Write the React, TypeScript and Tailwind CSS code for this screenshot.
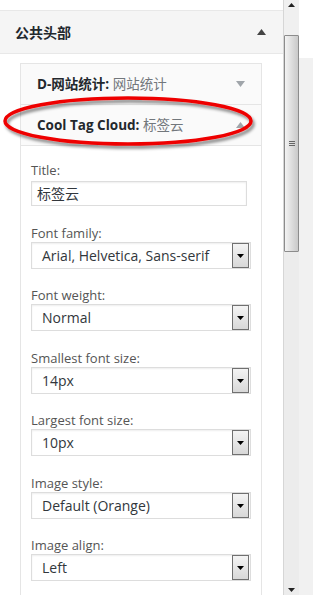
import React from "react";

const FONT = "font-['Open_Sans','Noto_Sans_CJK_SC',sans-serif]";

interface Field {
  label: string;
  value: string;
  gap: string;
}

// gaps alternate so the rows land on a 62.5px rhythm like the original
const selects: Field[] = [
  { label: "Font family:", value: "Arial, Helvetica, Sans-serif", gap: "mt-[18px]" },
  { label: "Font weight:", value: "Normal", gap: "mt-[17px]" },
  { label: "Smallest font size:", value: "14px", gap: "mt-[18px]" },
  { label: "Largest font size:", value: "10px", gap: "mt-[17px]" },
  { label: "Image style:", value: "Default (Orange)", gap: "mt-[18px]" },
  { label: "Image align:", value: "Left", gap: "mt-[17px]" },
];

const Arrow = ({ up, color }: { up?: boolean; color: string }) => (
  <svg width="9" height="6" viewBox="0 0 9 6" className="block">
    <polygon points={up ? "0,6 9,6 4.5,0" : "0,0 9,0 4.5,6"} fill={color} />
  </svg>
);

// Fake select with the old-style windows dropdown button
const SelectBox = ({ value }: { value: string }) => (
  <div className="flex items-center w-[220px] h-[27px] border border-[#dddddd] bg-white shadow-[inset_0_1px_2px_rgba(0,0,0,0.07)]">
    <span className="flex-1 pl-[10px] text-[14px] text-[#32373c] whitespace-nowrap overflow-hidden">{value}</span>
    <div className="w-[17px] h-[25px] mr-[1px] border border-[#707070] bg-gradient-to-b from-[#f4f4f4] to-[#d8d8d8] flex items-center justify-center">
      <svg width="7" height="4" viewBox="0 0 7 4">
        <polygon points="0,0 7,0 3.5,4" fill="#000" />
      </svg>
    </div>
  </div>
);

const WidgetHeader = ({ name, title, up }: { name: string; title: string; up?: boolean }) => (
  <div className="h-[40px] flex items-center justify-between pl-[16px] pr-[16px] bg-[#fafafa] text-[13.5px]">
    <span className="whitespace-nowrap">
      <span className="font-bold text-[#23282d]">{name}</span>
      <span className="text-[#72777c]"> {title}</span>
    </span>
    <Arrow up={up} color="#a0a5aa" />
  </div>
);

export default function App() {
  return (
    <div className={`relative w-[313px] h-[595px] flex overflow-hidden bg-white ${FONT}`}>
      {/* main column */}
      <div className="w-[283px] shrink-0 flex flex-col">
        <div className="h-[10px] shrink-0" />
        <div className="h-[44px] shrink-0 flex items-center justify-between pl-[15px] pr-[17px] bg-[#f5f5f5] border-y border-[#e8e8e8]">
          <span className="text-[14px] font-bold text-[#23282d]">公共头部</span>
          <Arrow up color="#444" />
        </div>
        <div className="flex-1 flex pt-[9px] pl-[20px]">
          <div className="w-[242px] border-x border-t border-[#e5e5e5]">
            <WidgetHeader name="D-网站统计:" title="网站统计" />
            <div className="border-t border-[#e5e5e5]">
              <WidgetHeader name="Cool Tag Cloud:" title="标签云" up />
            </div>
            <div className="border-t border-[#e5e5e5] pt-[15px] pl-[10px] text-[13px] text-[#555]">
              <div className="h-[18px] leading-[18px]">Title:</div>
              <div className="mt-[2px] w-[216px] h-[25px] border border-[#dddddd] flex items-center pl-[5px] text-[14px] text-[#32373c] shadow-[inset_0_1px_2px_rgba(0,0,0,0.07)]">
                标签云
              </div>
              {selects.map((f) => (
                <div key={f.label} className={f.gap}>
                  <div className="h-[18px] leading-[18px]">{f.label}</div>
                  <SelectBox value={f.value} />
                </div>
              ))}
            </div>
          </div>
        </div>
      </div>

      {/* scrollbar */}
      <div className="w-[16px] shrink-0 h-full flex flex-col bg-[#ececec] border-l border-[#d6d6d6]">
        <div className="h-[35px] shrink-0 flex justify-center pt-[3px] bg-[#f0f0f0]">
          <svg width="7" height="4" viewBox="0 0 7 4">
            <polygon points="0,4 7,4 3.5,0" fill="#222" />
          </svg>
        </div>
        <div className="h-[217px] shrink-0 border border-[#8c8c8c] rounded-[1px] bg-gradient-to-r from-[#f3f3f3] via-[#dedede] to-[#c9c9c9] flex items-center justify-center">
          <div className="flex flex-col gap-[1px]">
            <div className="w-[6px] h-[1px] bg-[#666]" />
            <div className="w-[6px] h-[1px] bg-[#666]" />
            <div className="w-[6px] h-[1px] bg-[#666]" />
          </div>
        </div>
        <div className="flex-1 flex items-end justify-center pb-[3px]">
          <svg width="7" height="4" viewBox="0 0 7 4">
            <polygon points="0,0 7,0 3.5,4" fill="#222" />
          </svg>
        </div>
      </div>

      {/* right strip */}
      <div className="flex-1 flex flex-col">
        <div className="h-[58px] shrink-0 bg-white" />
        <div className="flex-1 bg-[#f1f1f1]" />
      </div>

      {/* red annotation ellipse */}
      <svg className="absolute left-0 top-[92px] pointer-events-none" width="262" height="60" viewBox="0 0 262 60">
        <defs>
          <filter id="sh" x="-10%" y="-30%" width="120%" height="160%">
            <feDropShadow dx="2" dy="3" stdDeviation="1.5" floodColor="#000" floodOpacity="0.45" />
          </filter>
        </defs>
        <ellipse cx="128" cy="29" rx="123" ry="23" fill="none" stroke="#ee0000" strokeWidth="3.5" filter="url(#sh)" />
      </svg>
    </div>
  );
}
